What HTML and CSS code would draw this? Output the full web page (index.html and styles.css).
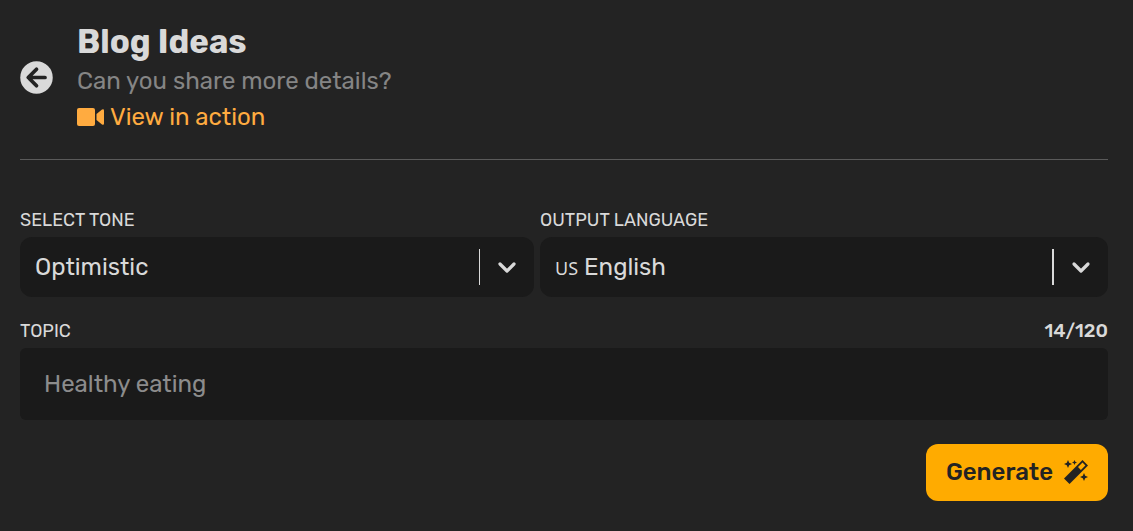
FILE: index.html
```html
<!DOCTYPE html>
<html lang="en">
<head>
    <meta charset="UTF-8">
    <meta name="viewport" content="width=device-width, initial-scale=1.0">
    <title>Blog Ideas</title>
    <link rel="stylesheet" href="styles.css">
</head>
<body>
    <main class="page">
        <header class="header">
            <button class="back" type="button" aria-label="Back">
                <svg viewBox="0 0 512 512" width="33" height="33">
                    <circle cx="256" cy="256" r="252" fill="currentColor"/>
                    <path d="M256 128 128 256l128 128M132 256h256" fill="none" stroke="#232323" stroke-width="58" stroke-linecap="round" stroke-linejoin="round"/>
                </svg>
            </button>
            <div class="heading">
                <h1>Blog Ideas</h1>
                <p>Can you share more details?</p>
                <a class="video-link" href="#">
                    <svg viewBox="0 0 27 18" width="27" height="18" fill="currentColor">
                        <rect width="18" height="18" rx="2"/>
                        <path d="M19.500 6 25 1.500Q27 .5 27 2.500V15.500Q27 17.500 25 16.500L19.500 12Z"/>
                    </svg>
                    <span>View in action</span>
                </a>
            </div>
        </header>

        <form class="form">
            <div class="options">
                <div class="field tone">
                    <label for="tone">SELECT TONE</label>
                    <div class="select">
                        <select id="tone">
                            <option>Optimistic</option>
                            <option>Professional</option>
                            <option>Friendly</option>
                        </select>
                        <span class="separator"></span>
                        <svg class="chevron" viewBox="0 0 28 28" width="28" height="28">
                            <path d="m7 11 7 7 7-7" fill="none" stroke="currentColor" stroke-width="3.200" stroke-linecap="round" stroke-linejoin="round"/>
                        </svg>
                    </div>
                </div>
                <div class="field language">
                    <label for="language">OUTPUT LANGUAGE</label>
                    <div class="select">
                        <span class="country">US</span>
                        <select id="language">
                            <option>English</option>
                            <option>Spanish</option>
                            <option>French</option>
                        </select>
                        <span class="separator thick"></span>
                        <svg class="chevron" viewBox="0 0 28 28" width="28" height="28">
                            <path d="m7 11 7 7 7-7" fill="none" stroke="currentColor" stroke-width="3.200" stroke-linecap="round" stroke-linejoin="round"/>
                        </svg>
                    </div>
                </div>
            </div>

            <div class="field">
                <div class="label-row">
                    <label for="topic">TOPIC</label>
                    <span class="counter">14/120</span>
                </div>
                <input id="topic" type="text" maxlength="120" value="Healthy eating">
            </div>

            <button class="generate" type="button">
                <span>Generate</span>
                <svg viewBox="0 0 24 24" width="24" height="24" fill="currentColor">
                    <path fill-rule="evenodd" d="M18.500 0 24 5.500 5.500 24 0 18.500ZM18.500 2.600 14 7.100 16.900 10 21.400 5.500Z"/>
                    <path d="m4 0 1.200 2.800L8 4 5.200 5.200 4 8 2.800 5.200 0 4l2.800-1.200ZM10.500 0l.8 1.700 1.700.8-1.700.8-.8 1.700-.8-1.700L8 2.500l1.700-.8ZM20 13l1.200 2.800L24 17l-2.800 1.200L20 21l-1.200-2.800L16 17l2.800-1.200Z"/>
                </svg>
            </button>
        </form>
    </main>
</body>
</html>
```
FILE: styles.css
```css
* {
    box-sizing: border-box;
}

body {
    margin: 0;
    background-color: #232323;
    color: #d9d9d9;
    font-family: Rubik, Inter, sans-serif;
    font-size: 24px;
}

button,
input,
select {
    font: inherit;
    color: inherit;
    border: none;
}

.page {
    padding: 20px 25px 30px 20px;
}

.header {
    display: flex;
    align-items: center;
    gap: 24px;
    padding-bottom: 24px;
    border-bottom: 1px solid #5a5a5a;
}

.back {
    display: flex;
    padding: 0;
    background: none;
    cursor: pointer;
}

.heading h1 {
    margin: 0;
    font-size: 33px;
    line-height: 44px;
    font-weight: 700;
}

.heading p {
    margin: 0;
    line-height: 35px;
    color: #858585;
}

.video-link {
    display: flex;
    align-items: center;
    gap: 6px;
    line-height: 36px;
    color: #ffab40;
    text-decoration: none;
}

.form {
    display: flex;
    flex-direction: column;
    gap: 24px;
    padding-top: 50px;
}

.options {
    display: flex;
    gap: 6px;
}

.field {
    display: flex;
    flex-direction: column;
    gap: 7px;
}

.tone {
    flex: 514 1 0;
}

.language {
    flex: 568 1 0;
}

.field label {
    font-size: 18px;
    line-height: 20px;
}

.counter {
    font-size: 19px;
    line-height: 20px;
    font-weight: 500;
}

.label-row {
    display: flex;
    justify-content: space-between;
}

.select {
    display: flex;
    align-items: center;
    height: 60px;
    padding: 0 13px 0 15px;
    border-radius: 12px;
    background-color: #1a1a1a;
}

.select select {
    flex: 1;
    min-width: 0;
    padding: 0;
    appearance: none;
    background: #1a1a1a;
    cursor: pointer;
}

.country {
    margin-right: 6px;
    padding-top: 2px;
    font-family: "Noto Sans", sans-serif;
    font-size: 18px;
    line-height: 24px;
}

.separator {
    width: 1px;
    height: 36px;
    margin-right: 13px;
    background-color: #d9d9d9;
}

.thick {
    width: 2px;
}

#topic {
    width: 100%;
    height: 72px;
    padding: 0 24px;
    border-radius: 6px;
    background-color: #1a1a1a;
    color: #8c8c8c;
}

.generate {
    display: flex;
    align-items: center;
    align-self: flex-end;
    gap: 11px;
    height: 57px;
    padding: 0 20px 2px;
    border-radius: 12px;
    background-color: #ffab00;
    color: #232323;
    font-weight: 500;
    cursor: pointer;
}

.generate:hover {
    background-color: #ffb826;
}
```
